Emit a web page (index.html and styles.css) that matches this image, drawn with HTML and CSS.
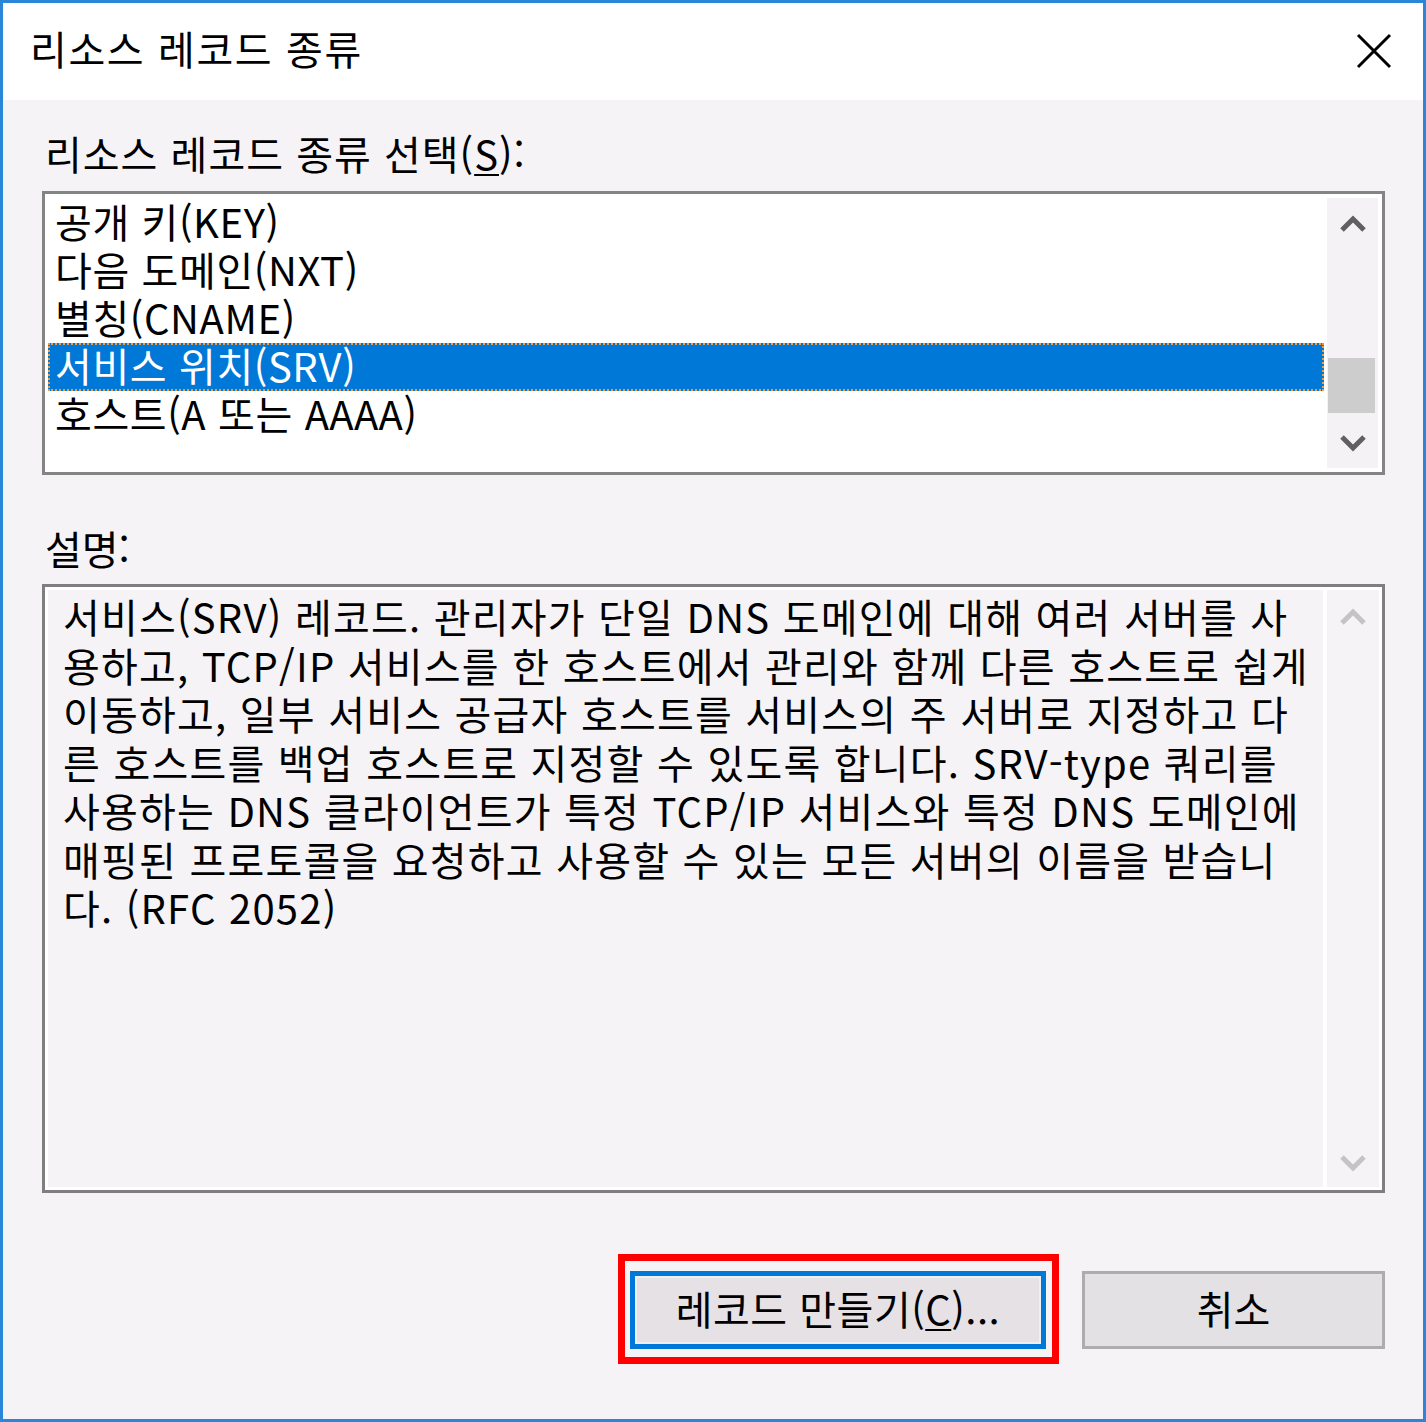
FILE: index.html
```html
<!DOCTYPE html>
<html lang="ko">
<head>
<meta charset="utf-8">
<title>리소스 레코드 종류</title>
<link rel="stylesheet" href="styles.css">
</head>
<body>
<div class="window">
  <div class="titlebar">
    <span class="title">리소스 레코드 종류</span>
    <svg class="close" width="36" height="36" viewBox="0 0 36 36"><path d="M2 2 L34 34 M34 2 L2 34" stroke="#000" stroke-width="3" fill="none"/></svg>
  </div>
  <div class="content">
    <div class="label label-top">리소스 레코드 종류 선택(<u>S</u>):</div>
    <div class="listbox">
      <div class="items">
        <div class="item">공개 키(KEY)</div>
        <div class="item">다음 도메인(NXT)</div>
        <div class="item">별칭(CNAME)</div>
        <div class="item selected">서비스 위치(SRV)</div>
        <div class="item">호스트(A 또는 AAAA)</div>
      </div>
      <div class="scrollbar list-scroll">
        <div class="arrow"><svg width="26" height="18" viewBox="0 0 26 18"><polyline points="2,15 13,4 24,15" fill="none" stroke="#606060" stroke-width="5"/></svg></div>
        <div class="track"><div class="thumb"></div></div>
        <div class="arrow"><svg width="26" height="18" viewBox="0 0 26 18"><polyline points="2,3 13,14 24,3" fill="none" stroke="#606060" stroke-width="5"/></svg></div>
      </div>
    </div>
    <div class="label label-desc">설명:</div>
    <div class="descbox">
      <div class="desctext">서비스(SRV) 레코드. 관리자가 단일 DNS 도메인에 대해 여러 서버를 사<br>용하고, TCP/IP 서비스를 한 호스트에서 관리와 함께 다른 호스트로 쉽게<br>이동하고, 일부 서비스 공급자 호스트를 서비스의 주 서버로 지정하고 다<br>른 호스트를 백업 호스트로 지정할 수 있도록 합니다. SRV-type 쿼리를<br>사용하는 DNS 클라이언트가 특정 TCP/IP 서비스와 특정 DNS 도메인에<br>매핑된 프로토콜을 요청하고 사용할 수 있는 모든 서버의 이름을 받습니<br>다. (RFC 2052)</div>
      <div class="scrollbar desc-scroll">
        <div class="arrow"><svg width="26" height="18" viewBox="0 0 26 18"><polyline points="2,15 13,4 24,15" fill="none" stroke="#c4c4c4" stroke-width="5"/></svg></div>
        <div class="track"></div>
        <div class="arrow"><svg width="26" height="18" viewBox="0 0 26 18"><polyline points="2,3 13,14 24,3" fill="none" stroke="#c4c4c4" stroke-width="5"/></svg></div>
      </div>
    </div>
    <div class="buttons">
      <div class="btn btn-primary">레코드 만들기(<u>C</u>)...</div>
      <div class="btn btn-cancel">취소</div>
    </div>
  </div>
</div>
</body>
</html>
```

FILE: styles.css
```css
html, body {
  margin: 0;
  padding: 0;
}
body {
  font-family: "Noto Sans CJK KR", "Noto Sans", sans-serif;
  font-size: 40px;
  color: #000;
  background: #f6f3f6;
}
.window {
  width: 1426px;
  height: 1422px;
  box-sizing: border-box;
  border: 3px solid #2a86d8;
  background: #f6f3f6;
  display: flex;
  flex-direction: column;
}
.titlebar {
  height: 97px;
  background: #fff;
  display: flex;
  align-items: center;
  justify-content: space-between;
  padding: 0 31px 0 27px;
  flex-shrink: 0;
}
.title {
  line-height: 48px;
  margin-top: -8px;
  letter-spacing: 1.6px;
}
.close {
  display: block;
  margin-top: -2px;
}
.content {
  padding: 0 38px 0 39px;
  display: flex;
  flex-direction: column;
}
.label {
  line-height: 48px;
  padding-left: 3px;
}
.label u {
  text-underline-offset: 4px;
  text-decoration-thickness: 2px;
}
.label-top {
  margin-top: 29px;
  letter-spacing: 1px;
}
.listbox {
  margin-top: 14px;
  height: 284px;
  box-sizing: border-box;
  border: 3px solid #848484;
  background: #fff;
  padding: 4px 4px 4px 3px;
  display: flex;
}
.items {
  flex: 1;
  padding-top: 1px;
  margin-right: 3px;
}
.item {
  height: 48px;
  line-height: 44px;
  padding-left: 7px;
  box-sizing: border-box;
  white-space: nowrap;
  letter-spacing: 0.6px;
}
.item.selected {
  background: #0078d7;
  color: #fff;
  border: 2px dotted #f39a3c;
  padding-left: 5px;
  line-height: 40px;
}
.scrollbar {
  width: 51px;
  background: #f5f2f5;
  display: flex;
  flex-direction: column;
  flex-shrink: 0;
}
.arrow {
  height: 51px;
  display: flex;
  align-items: center;
  justify-content: center;
}
.track {
  flex: 1;
}
.thumb {
  margin: 109px 3px 0 1px;
  height: 55px;
  background: #cdcdcd;
}
.label-desc {
  margin-top: 49px;
}
.descbox {
  margin-top: 12px;
  height: 609px;
  box-sizing: border-box;
  border: 3px solid #7f7f7f;
  box-shadow: inset 0 0 0 3px #fff;
  padding: 3px 4px 3px 3px;
  display: flex;
}
.desctext {
  flex: 1;
  padding: 2px 0 0 15px;
  line-height: 48.5px;
  letter-spacing: 1.2px;
  white-space: nowrap;
}
.desc-scroll {
  border-left: 4px solid #fff;
  background: #f6f3f6;
}
.desc-scroll .arrow:first-child {
  align-items: flex-start;
  padding-top: 18px;
  box-sizing: border-box;
}
.desc-scroll .arrow:last-child {
  align-items: flex-end;
  padding-bottom: 15px;
  box-sizing: border-box;
}
.buttons {
  margin-top: 78px;
  display: flex;
  justify-content: flex-end;
  gap: 36px;
}
.btn {
  height: 78px;
  box-sizing: border-box;
  display: flex;
  align-items: center;
  justify-content: center;
  white-space: nowrap;
  padding-bottom: 4px;
}
.btn u {
  text-underline-offset: 4px;
  text-decoration-thickness: 2px;
}
.btn-primary {
  position: relative;
  width: 416px;
  border: 5px solid #0078d7;
  background: #e5e1e5;
  box-shadow: inset 0 0 0 2px #f0eef0;
  letter-spacing: 0.5px;
}
.btn-primary::after {
  content: "";
  position: absolute;
  top: -22px;
  left: -17px;
  right: -18px;
  bottom: -20px;
  border: 7px solid #ff0000;
}
.btn-cancel {
  width: 303px;
  border: 3px solid #adadad;
  background: #e3e1e4;
}
```
